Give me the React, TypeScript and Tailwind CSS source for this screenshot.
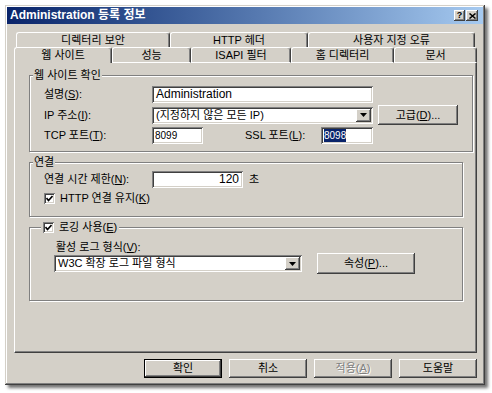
const raised =
  'bg-[#d4d0c8] shadow-[inset_-1px_-1px_0_#404040,inset_1px_1px_0_#fff,inset_-2px_-2px_0_#808080,inset_2px_2px_0_#d4d0c8]';
const sunken =
  'bg-white shadow-[inset_1px_1px_0_#808080,inset_-1px_-1px_0_#fff,inset_2px_2px_0_#404040,inset_-2px_-2px_0_#d4d0c8]';
const group =
  'border border-[#808080] shadow-[inset_1px_1px_0_#fff,1px_1px_0_#fff]';

const backTabs = [
  { label: '디렉터리 보안', w: 'w-[154px]' },
  { label: 'HTTP 헤더', w: 'w-[138px]' },
  { label: '사용자 지정 오류', w: 'w-[167px]' },
];

const frontTabs = [
  { label: '웹 사이트', w: 'w-[98px]', active: true },
  { label: '성능', w: 'w-[79px]' },
  { label: 'ISAPI 필터', w: 'w-[100px]' },
  { label: '홈 디렉터리', w: 'w-[103px]' },
  { label: '문서', w: 'w-[83px]' },
];

function DropArrow() {
  return (
    <div className={'flex h-[13px] w-[15px] shrink-0 items-center justify-center ' + raised}>
      <svg width="7" height="4" viewBox="0 0 7 4">
        <polygon points="0,0 7,0 3.5,4" fill="#000" />
      </svg>
    </div>
  );
}

function Check() {
  return (
    <div className={'flex h-[11px] w-[11px] shrink-0 items-center justify-center ' + sunken}>
      <svg width="7" height="7" viewBox="0 0 7 7">
        <polyline points="0.5,3 2.5,5.5 6.5,1" fill="none" stroke="#000" strokeWidth="1.6" />
      </svg>
    </div>
  );
}

function Button({ children, className = '' }: { children: React.ReactNode; className?: string }) {
  return (
    <div className={'flex items-center justify-center ' + raised + ' ' + className}>{children}</div>
  );
}

export default function App() {
  return (
    <div className="h-[393px] w-[492px] bg-white pl-[5px] pt-[5px] font-['Liberation_Sans','Noto_Sans_CJK_KR',sans-serif] text-[11px] leading-[13px] text-black">
      <div className="flex h-[380px] w-[480px] flex-col bg-[#d4d0c8] p-[2px] shadow-[inset_-1px_-1px_0_#404040,inset_1px_1px_0_#d4d0c8,inset_-2px_-2px_0_#808080,inset_2px_2px_0_#fff,3px_3px_3px_rgba(0,0,0,0.55)]">
        {/* title bar */}
        <div className="flex h-[17px] items-center bg-linear-to-r from-[#0a246a] to-[#a6caf0] pl-[3px] pr-[5px]">
          <span className="flex-1 text-[12px] font-bold text-white">Administration 등록 정보</span>
          <div className="flex gap-px">
            <Button className="h-[11px] w-[11px] text-[9px] font-bold leading-none">?</Button>
            <Button className="h-[11px] w-[12px]">
              <svg width="7" height="6" viewBox="0 0 7 6">
                <path d="M0.5 0.5 L6.5 5.5 M6.5 0.5 L0.5 5.5" stroke="#000" strokeWidth="1.5" />
              </svg>
            </Button>
          </div>
        </div>

        <div className="flex flex-1 flex-col pl-[7px] pr-[6px] pt-[8px]">
          {/* tabs */}
          <div className="ml-[2px] flex h-[15px]">
            {backTabs.map((t) => (
              <div
                key={t.label}
                className={
                  'flex items-center justify-center rounded-t-[3px] border-l border-t border-white border-r-[#404040] border-r shadow-[inset_-1px_0_0_#808080] ' +
                  t.w
                }
              >
                {t.label}
              </div>
            ))}
          </div>
          <div className="flex h-[16px]">
            {frontTabs.map((t) => (
              <div
                key={t.label}
                className={
                  'flex items-center justify-center rounded-t-[3px] border-l border-t border-r border-white border-r-[#404040] shadow-[inset_-1px_0_0_#808080] ' +
                  (t.active ? '' : 'border-b border-b-white ') +
                  t.w
                }
              >
                {t.label}
              </div>
            ))}
          </div>

          {/* panel */}
          <div className="flex h-[290px] flex-col border-b border-l border-r border-l-white border-b-[#404040] border-r-[#404040] pl-[14px] pr-[13px] pt-[6px] shadow-[inset_-1px_-1px_0_#808080]">
            <fieldset className={'px-[14px] pb-[7px] pt-[4px] ' + group}>
              <legend className="-ml-[11px] bg-[#d4d0c8] px-[1px]">웹 사이트 확인</legend>
              <div className="flex flex-col gap-[2px]">
                <div className="flex h-[17px] items-center">
                  <span className="w-[108px]">
                    설명(<u>S</u>):
                  </span>
                  <div className={'flex h-[17px] w-[221px] items-center pl-[4px] text-[12px] ' + sunken}>
                    Administration
                  </div>
                </div>
                <div className="flex h-[20px] items-center">
                  <span className="w-[108px]">
                    IP 주소(<u>I</u>):
                  </span>
                  <div className={'flex h-[17px] w-[221px] items-center justify-between p-[2px] pl-[4px] ' + sunken}>
                    <span>(지정하지 않은 모든 IP)</span>
                    <DropArrow />
                  </div>
                  <Button className="ml-[5px] h-[20px] w-[80px]">
                    고급(<u>D</u>)...
                  </Button>
                </div>
                <div className="flex h-[17px] items-center">
                  <span className="w-[108px]">
                    TCP 포트(<u>T</u>):
                  </span>
                  <div className={'flex h-[17px] w-[51px] items-center pl-[3px] text-[10px] ' + sunken}>8099</div>
                  <span className="w-[118px] pl-[42px]">
                    SSL 포트(<u>L</u>):
                  </span>
                  <div className={'flex h-[17px] w-[52px] items-center pl-[3px] text-[10px] ' + sunken}>
                    <span className="bg-[#0a246a] text-white">8098</span>
                  </div>
                </div>
              </div>
            </fieldset>

            <fieldset className={'mt-[4px] px-[14px] pb-[11px] pt-[2px] ' + group}>
              <legend className="-ml-[11px] bg-[#d4d0c8] px-[1px]">연결</legend>
              <div className="flex h-[17px] items-center">
                <span className="w-[108px]">
                  연결 시간 제한(<u>N</u>):
                </span>
                <div className={'flex h-[17px] w-[91px] items-center justify-end pr-[4px] text-[12px] ' + sunken}>
                  120
                </div>
                <span className="ml-[6px]">초</span>
              </div>
              <div className="mt-[4px] flex h-[13px] items-center gap-[5px]">
                <Check />
                <span>
                  HTTP 연결 유지(<u>K</u>)
                </span>
              </div>
            </fieldset>

            <fieldset className={'mt-[4px] pb-[26px] pl-[24px] pt-[7px] ' + group}>
              <legend className="-ml-[13px] flex h-[13px] items-center gap-[5px] bg-[#d4d0c8] px-[2px]">
                <Check />
                <span>
                  로깅 사용(<u>E</u>)
                </span>
              </legend>
              <div className="h-[12px] pl-[2px]">
                활성 로그 형식(<u>V</u>):
              </div>
              <div className="flex h-[21px] items-center">
                <div className={'flex h-[17px] w-[248px] items-center justify-between p-[2px] pl-[4px] ' + sunken}>
                  <span>W3C 확장 로그 파일 형식</span>
                  <DropArrow />
                </div>
                <Button className="ml-[15px] h-[21px] w-[98px]">
                  속성(<u>P</u>)...
                </Button>
              </div>
            </fieldset>
          </div>

          {/* dialog buttons */}
          <div className="mt-[6px] flex justify-end gap-[7px]">
            <div className="h-[19px] w-[78px] border border-black">
              <Button className="h-full w-full">확인</Button>
            </div>
            <Button className="h-[19px] w-[78px]">취소</Button>
            <Button className="h-[19px] w-[78px] text-[#808080] [text-shadow:1px_1px_0_#fff]">
              적용(<u>A</u>)
            </Button>
            <Button className="h-[19px] w-[78px]">도움말</Button>
          </div>
        </div>
      </div>
    </div>
  );
}
